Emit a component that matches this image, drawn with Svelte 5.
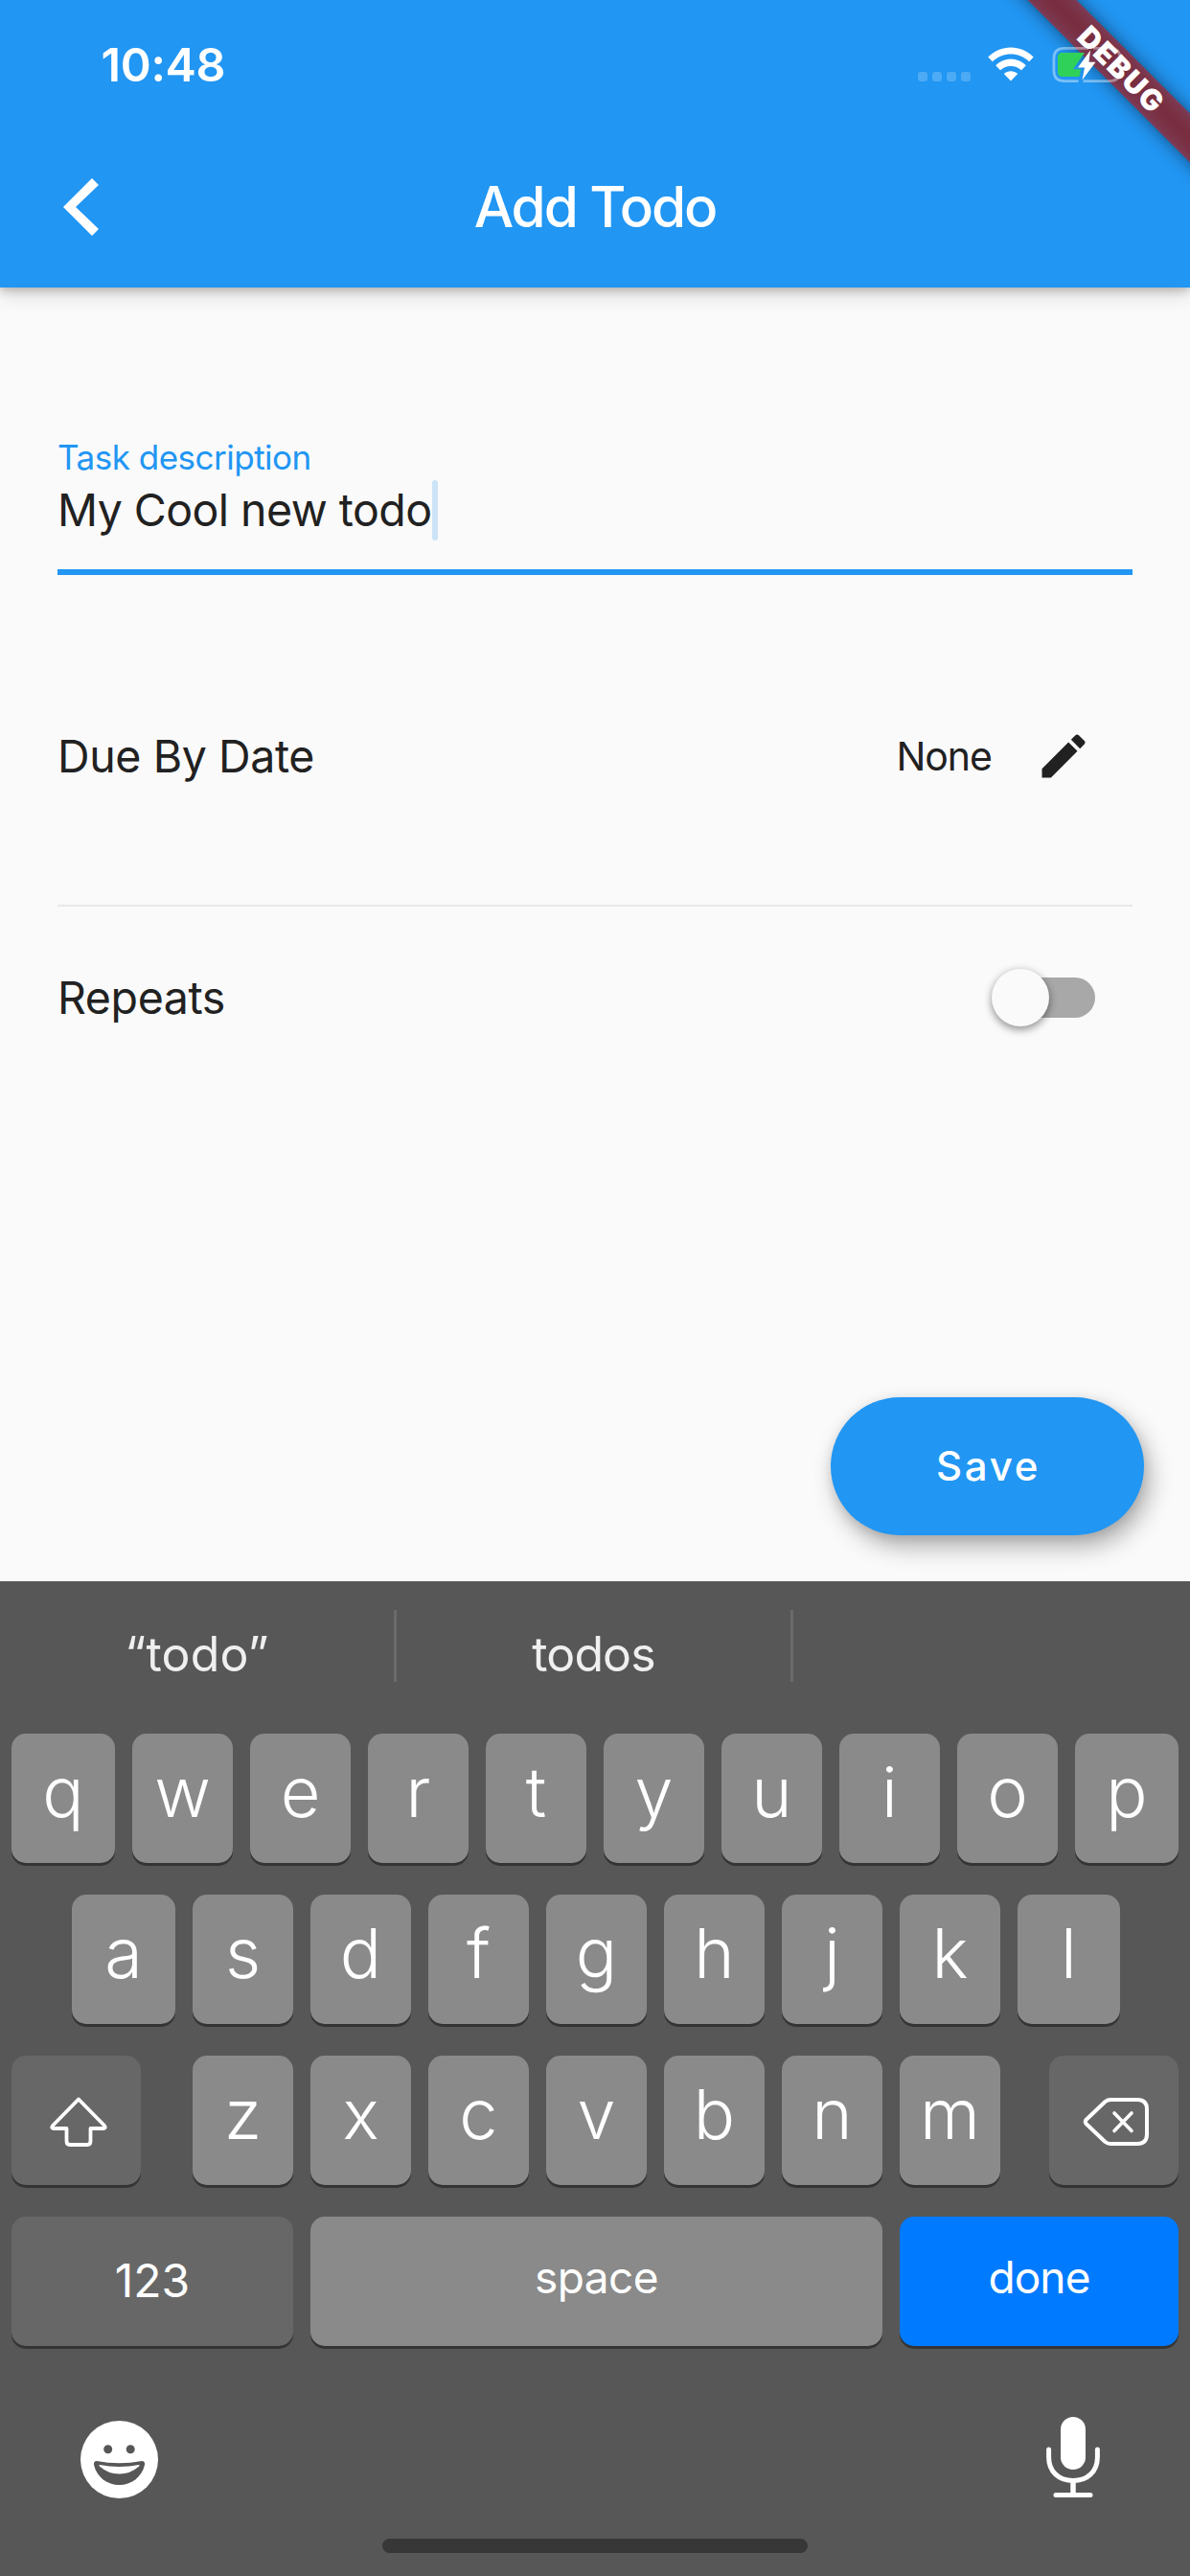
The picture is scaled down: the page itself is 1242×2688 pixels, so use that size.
<script>
  const suggestions = ['“todo”', 'todos', ''];
  const topRow = 'qwertyuiop'.split('');
  const homeRow = 'asdfghjkl'.split('');
  const bottomRow = 'zxcvbnm'.split('');
</script>

<div class="screen">
  <header>
    <div class="status">
      <span class="time">10:48</span>
      <div class="indicators">
        <div class="signal"><i></i><i></i><i></i><i></i></div>
        <svg class="wifi" width="48" height="36" viewBox="0 0 48 36" fill="#fff">
          <path d="M0.3 10.6C13 -3 35 -3 47.7 10.6L43.2 15.3C32.5 4.8 15.5 4.8 4.8 15.3Z" />
          <path d="M8.2 19.2C17 10.4 31 10.4 39.8 19.2L35 24.3C29 18.6 19 18.6 13 24.3Z" />
          <path d="M16.8 28C20.8 24.2 27.2 24.2 31.2 28L24 35.6Z" />
        </svg>
        <svg class="battery" width="84" height="40" viewBox="0 0 84 40">
          <path d="M38 2.4H13C5.5 2.4 1.9 6 1.9 13V25.5C1.9 33 5.5 36.6 13 36.6H27.5M43 2.4H60C67.5 2.4 71.1 6 71.1 13V25.5C71.1 33 67.5 36.6 60 36.6H32.5" fill="none" stroke="#fff" stroke-opacity=".4" stroke-width="2.8" />
          <path d="M11 7H34L22 24.3H30L28.5 32H11Q6 32 6 27V12Q6 7 11 7Z" fill="#30d158" />
          <path d="M40 4.5L27 22.4H34L31.5 35.5L45.500 16.7H38.500Z" fill="#fff" />
        </svg>
      </div>
    </div>
    <div class="appbar">
      <svg class="back" width="40" height="62" viewBox="0 0 40 62" fill="#fff">
        <path d="M31 1L38 8L14 31L38 54L31 61L1 31Z" />
      </svg>
      <h1>Add Todo</h1>
    </div>
  </header>

  <main>
    <div class="field">
      <label for="task">Task description</label>
      <div class="value" id="task"><span>My Cool new todo</span><i class="cursor"></i></div>
    </div>
    <div class="row due">
      <span>Due By Date</span>
      <div class="trailing">
        <span class="none">None</span>
        <svg width="60" height="60" viewBox="0 0 24 24" fill="#212121">
          <path d="M3 17.25V21h3.75L17.81 9.94l-3.75-3.75L3 17.25zM20.71 7.04c.39-.39.39-1.02 0-1.41l-2.34-2.34c-.39-.39-1.02-.39-1.41 0l-1.83 1.83 3.75 3.75 1.83-1.83z" />
        </svg>
      </div>
    </div>
    <div class="row repeats">
      <span>Repeats</span>
      <div class="switch"><i></i></div>
    </div>
    <button class="save">Save</button>
  </main>

  <section class="keyboard">
    <div class="suggestions">
      {#each suggestions as word, i}
        <span class:quoted={i === 0}>{word}</span>
      {/each}
    </div>
    <div class="keys top">
      {#each topRow as k}<div class="key">{k}</div>{/each}
    </div>
    <div class="keys home">
      {#each homeRow as k}<div class="key">{k}</div>{/each}
    </div>
    <div class="keys bottom">
      <div class="key dark">
        <svg width="62" height="54" viewBox="0 0 62 54" fill="none" stroke="#fff" stroke-width="3.8" stroke-linejoin="round">
          <path d="M31 3.5L58 31Q60 34 57 34H43.500V47Q43.500 51 40 51H22Q18.500 51 18.500 47V34H5Q2 34 4 31Z" />
        </svg>
      </div>
      <div class="letters">
        {#each bottomRow as k}<div class="key">{k}</div>{/each}
      </div>
      <div class="key dark">
        <svg width="70" height="52" viewBox="0 0 70 52" fill="none" stroke="#fff" stroke-width="4" stroke-linejoin="round" stroke-linecap="round">
          <path d="M23.5 5Q26 3 29 3H57Q67 3 67 13V39Q67 49 57 49H29Q26 49 23.5 47L3.5 28Q2 26 3.5 24Z" />
          <path d="M33 17L51 35.5M51 17L33 35.5" stroke-width="3.6" />
        </svg>
      </div>
    </div>
    <div class="keys actions">
      <div class="key dark numbers">123</div>
      <div class="key space">space</div>
      <div class="key done">done</div>
    </div>
    <div class="tools">
      <svg width="81" height="81" viewBox="0 0 81 81">
        <circle cx="40.5" cy="40.5" r="40.5" fill="#fff" />
        <g fill="#575757">
          <circle cx="28.7" cy="29.7" r="4.5" />
          <circle cx="52.2" cy="29.7" r="4.5" />
          <path d="M17 42Q40.5 46.5 64 42Q67.5 42 67 46C64 59 53 67 40.5 67S17 59 14 46Q13.5 42 17 42Z" />
        </g>
        <path d="M20 46Q40.5 50 61 46Q62.5 46.5 60.5 48Q52 55.5 40.5 55.5T20.5 48Q18.5 46.5 20 46Z" fill="#fff" />
      </svg>
      <svg width="56" height="85" viewBox="0 0 56 85" fill="none" stroke="#fff" stroke-linecap="round">
        <rect x="15" y="0" width="26" height="55" rx="13" fill="#fff" stroke="none" />
        <path d="M2.6 34V42C2.6 57 13 66.5 28 66.5S53.4 57 53.4 42V34" stroke-width="5" />
        <path d="M28 67V81" stroke-width="5.5" />
        <path d="M10 81.5H46" stroke-width="5" />
      </svg>
    </div>
    <div class="home-indicator"></div>
  </section>

  <div class="ribbon-clip">
    <div class="ribbon-shadow"></div>
    <div class="ribbon"></div>
  </div>
  <div class="ribbon-clip label">
    <div class="ribbon-text">DEBUG</div>
  </div>
</div>

<style>
  :global(body) { margin: 0; background: #fafafa; }
  .screen {
    position: relative;
    width: 1242px;
    height: 2688px;
    display: flex;
    flex-direction: column;
    overflow: hidden;
    background: #fafafa;
    color: #212121;
    font-family: Inter, "Liberation Sans", sans-serif;
  }
  header {
    height: 300px;
    background: #2196f3;
    color: #fff;
    box-shadow: 0 3px 9px rgba(0, 0, 0, .2), 0 6px 20px rgba(0, 0, 0, .16);
  }
  .status {
    height: 132px;
    display: flex;
    justify-content: space-between;
    box-sizing: border-box;
    padding-left: 105.5px;
    padding-right: 60px;
  }
  .time { font-size: 48.5px; line-height: 136px; font-weight: 600; letter-spacing: -.3px; }
  /* The system indicators are painted above the debug ribbon. */
  .indicators { position: relative; z-index: 3; display: flex; align-items: flex-start; padding-top: 48px; }
  .signal { display: flex; gap: 5px; padding-top: 27px; margin-right: 18px; }
  .signal i { width: 10px; height: 10px; border-radius: 3px; background: rgba(255, 255, 255, .2); }
  .wifi { margin: 1px 19px 0 0; }
  .appbar { height: 168px; display: grid; grid-template-columns: 168px 1fr 168px; align-items: center; }
  .back { margin-left: 65px; }
  h1 { margin: 0; text-align: center; font-size: 58.5px; line-height: 70px; padding-bottom: 1px; font-weight: 550; letter-spacing: -2.1px; }

  main { height: 1350px; display: flex; flex-direction: column; }
  .field { margin: 150px 60px 0; height: 150px; box-sizing: border-box; border-bottom: 6px solid #2196f3; }
  label { display: block; height: 54px; line-height: 54px; font-size: 35px; color: #2196f3; margin-bottom: -3px; letter-spacing: -.5px; }
  .value { display: flex; height: 63px; line-height: 63px; font-size: 46.5px; letter-spacing: -.55px; }
  .cursor { width: 6px; height: 63px; border-radius: 3px; background: #cce3f7; }
  .row { margin: 0 60px; display: flex; align-items: center; justify-content: space-between; font-size: 46.5px; letter-spacing: -.4px; }
  .due { padding-top: 33px; height: 311px; border-bottom: 2px solid #e8e8e8; }
  .trailing { display: flex; align-items: center; gap: 45px; padding-right: 42px; }
  .none { font-size: 41px; letter-spacing: -1px; }
  .repeats { height: 190px; }
  .switch { width: 99px; height: 42px; margin-right: 39px; border-radius: 21px; background: #a8a8a8; display: flex; align-items: center; }
  .switch i {
    flex: none;
    width: 60px;
    height: 60px;
    margin-left: -9px;
    border-radius: 50%;
    background: #fafafa;
    box-shadow: 0 4px 8px rgba(0, 0, 0, .35), 0 0 8px rgba(0, 0, 0, .12);
  }
  .save {
    margin: 322px 48px 0 auto;
    width: 327px;
    height: 144px;
    border: 0;
    padding: 0 0 2px 2px;
    border-radius: 72px;
    background: #2196f3;
    color: #fff;
    font-family: inherit;
    font-size: 42px;
    font-weight: 550;
    letter-spacing: 2.7px;
    box-shadow: 6px 12px 24px rgba(0, 0, 0, .3), 0 3px 12px rgba(0, 0, 0, .1);
  }

  .keyboard { height: 1038px; background: #575757; color: #fff; display: flex; flex-direction: column; z-index: 1; }
  .suggestions { height: 75px; margin: 30px 0 54px; display: grid; grid-template-columns: 414px 414px 414px; }
  .suggestions span {
    box-sizing: border-box;
    height: 75px;
    border-right: 3px solid #6b6b6b;
    text-align: center;
    font-size: 50px;
    line-height: 93px;
    letter-spacing: -.9px;
    color: #efefef;
  }
  .suggestions .quoted { letter-spacing: .2px; }
  .suggestions span:last-child { border: 0; }
  .keys { height: 135px; margin: 0 12px 33px; display: flex; gap: 18px; }
  .key {
    flex: none;
    width: 105px;
    height: 135px;
    box-sizing: border-box;
    padding-bottom: 15px;
    display: flex;
    align-items: center;
    justify-content: center;
    border-radius: 15px;
    background: #8a8a8a;
    box-shadow: 0 3px 0 #343434;
    font-size: 72px;
    font-weight: 350;
  }
  .top .key:first-child, .top .key:last-child, .home .key:first-child { width: 108px; }
  .home { margin-left: 75px; }
  .home .key:last-child { width: 107px; }
  .bottom { justify-content: space-between; }
  .letters { display: flex; gap: 18px; margin-left: 3px; }
  .key.dark { width: 135px; background: #676767; padding: 3px 0 0 4px; }
  .key.numbers, .key.space, .key.done { font-size: 46px; font-weight: 400; }
  .key.numbers { width: 294px; padding: 0 0 2px; font-size: 48px; }
  .key.space { width: 597px; padding-bottom: 9px; letter-spacing: -.6px; }
  .key.done { width: 291px; padding-bottom: 9px; background: #007aff; letter-spacing: -.9px; }
  .tools { display: flex; justify-content: space-between; align-items: flex-start; height: 123px; padding: 45px 94px 0 84px; box-sizing: border-box; }
  .tools svg:last-child { margin-top: -4px; }
  .home-indicator { width: 444px; height: 15px; margin: 45px auto 0; border-radius: 8px; background: #373737; }

  .ribbon-clip { position: absolute; top: 0; right: 0; width: 300px; height: 300px; overflow: hidden; z-index: 2; }
  .ribbon-clip.label { z-index: 4; }
  .ribbon, .ribbon-shadow, .ribbon-text { position: absolute; left: 48.25px; top: 53.75px; width: 360px; height: 36px; transform: rotate(45deg); }
  .ribbon-shadow { background: rgba(0, 0, 0, .5); filter: blur(9px); }
  .ribbon { background: rgba(183, 28, 28, .627); }
  .ribbon-text { color: #fff; text-align: center; text-indent: 1.5px; font-size: 30.5px; line-height: 36px; font-weight: 900; letter-spacing: 1.5px; }
</style>
